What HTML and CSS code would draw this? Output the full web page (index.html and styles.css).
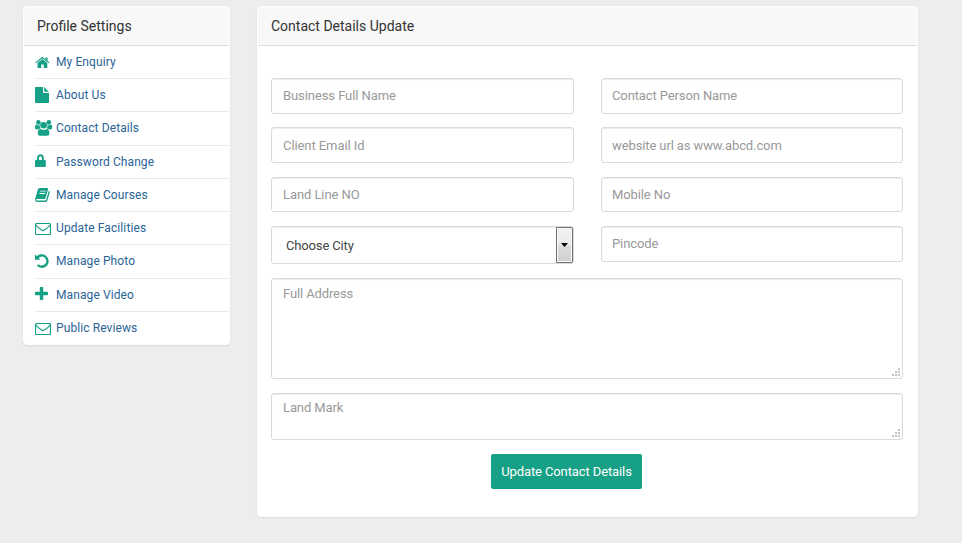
FILE: index.html
```html
<!DOCTYPE html>
<html lang="en">
<head>
<meta charset="utf-8">
<title>Contact Details Update</title>
<link rel="stylesheet" href="styles.css">
</head>
<body>
<main class="layout">
  <aside class="panel sidebar">
    <h2 class="panel-title">Profile Settings</h2>
    <ul class="menu">
      <li><a href="#"><svg viewBox="0 0 18 18"><path d="M2.5 10 7.4 6 12.3 10V14.4q0 .6-.6.6H8.7V11.4H6.2V15H3.1q-.6 0-.6-.6z"/><path d="M.6 9.9 7.4 4.6 14.2 9.9" fill="none" stroke="#16a085" stroke-width="1.2"/><path d="M10.6 4.5h2v3.6l-2-1.6z"/></svg>My Enquiry</a></li>
      <li><a href="#"><svg viewBox="0 0 18 18"><path d="M0 1.8Q0 1 .8 1H8v5.2q0 .8.8.8H14v9.2q0 .8-.8.8H.8q-.8 0-.8-.8z"/><path d="M9.2 1.1 13.8 5.8H9.2z"/></svg>About Us</a></li>
      <li><a href="#"><svg viewBox="0 0 18 18"><circle cx="3.4" cy="3.4" r="2.3"/><circle cx="13.8" cy="3.4" r="2.3"/><circle cx="8.6" cy="6.2" r="3.3"/><path d="M0 8.2Q0 5.4 1.2 5.4q2 1.2 3.4.7-.2 2 1 3.3-1.6 0-2.4 1H1.5Q0 10.3 0 8.2zM17.2 8.2Q17.2 5.4 16 5.4q-2 1.2-3.4.7.2 2-1 3.3 1.6 0 2.4 1h1.7q1.5-.1 1.5-2.2z"/><path d="M2.8 14.500q0-4.500 2.700-4.500 3 2.100 6.200 0 2.700 0 2.700 4.500 0 2.300-2.300 2.300H5.100q-2.300 0-2.300-2.300z"/></svg>Contact Details</a></li>
      <li><a href="#"><svg viewBox="0 0 18 18"><path d="M2.900 8V5.200a2.500 3 0 0 1 5 0V8" fill="none" stroke="#16a085" stroke-width="1.900"/><rect y="7" width="10.800" height="7" rx=".7"/></svg>Password Change</a></li>
      <li><a href="#"><svg viewBox="0 0 18 18"><path fill-rule="evenodd" d="M4.800 2H12q1.400.1 1 1.500l-2.500 8.400q-.3 1-1.300 1H2q-1 0-.9.800.1.900 1.100.9h8.200q.5 0 .7-.5l2.700-9.300q1.300.5.9 1.900l-2.400 8.100q-.4 1.200-1.600 1.200H2.200Q.7 16 .2 14.600q-.4-1.300.1-2.300L2.700 4Q3.200 2 4.800 2zM5.400 4.700 5.100 5.600H10.700L11 4.700zM4.700 7 4.400 7.900H10L10.300 7z"/></svg>Manage Courses</a></li>
      <li><a href="#"><svg viewBox="0 0 18 18"><path class="line" d="M1.400 4.500h13.200q.9 0 .9.900v9.200q0 .9-.9.900H1.400q-.9 0-.9-.9V5.400q0-.9.900-.9zM1 5.800Q1.500 7.500 6.600 11q1.400 1.100 2.800 0 5.100-3.500 5.600-5.200"/></svg>Update Facilities</a></li>
      <li><a href="#"><svg viewBox="0 0 18 18"><path d="M2 5.900A5.700 5.700 0 1 1 2.600 13" fill="none" stroke="#16a085" stroke-width="2.400"/><path d="M0 2.500V7.700H5.300L3.800 6.100 1.500 3.800z"/></svg>Manage Photo</a></li>
      <li><a href="#"><svg viewBox="0 0 18 18"><path d="M5.500 1h2q.7 0 .7.700v4.100h4.100q.7 0 .7.700v2q0 .7-.7.700H8.200v4.100q0 .7-.7.700h-2q-.7 0-.7-.7V9.200H.7Q0 9.200 0 8.500v-2q0-.7.700-.7h4.100V1.700q0-.7.700-.7z"/></svg>Manage Video</a></li>
      <li><a href="#"><svg viewBox="0 0 18 18"><path class="line" d="M1.400 4.500h13.200q.9 0 .9.900v9.200q0 .9-.9.900H1.400q-.9 0-.9-.9V5.400q0-.9.900-.9zM1 5.800Q1.500 7.500 6.600 11q1.400 1.100 2.800 0 5.100-3.500 5.600-5.200"/></svg>Public Reviews</a></li>
    </ul>
  </aside>
  <section class="panel content">
    <h2 class="panel-title">Contact Details Update</h2>
    <form class="form">
      <div class="fields">
        <input class="control raised" placeholder="Business Full Name">
        <input class="control raised right" placeholder="Contact Person Name">
        <input class="control" placeholder="Client Email Id">
        <input class="control right" placeholder="website url as www.abcd.com">
        <input class="control short" placeholder="Land Line NO">
        <input class="control short right" placeholder="Mobile No">
        <div class="control select"><span>Choose City</span><i class="arrow"><svg viewBox="0 0 7 4"><path d="M0 0h7L3.500 4z"/></svg></i></div>
        <input class="control raised right" placeholder="Pincode">
      </div>
      <div class="area address"><textarea class="control" placeholder="Full Address"></textarea><svg class="grip" viewBox="0 0 8 8"><path d="M6 0h2v2H6zM3 3h2v2H3zM6 3h2v2H6zM0 6h2v2H0zM3 6h2v2H3zM6 6h2v2H6z"/></svg></div>
      <div class="area landmark"><textarea class="control" placeholder="Land Mark"></textarea><svg class="grip" viewBox="0 0 8 8"><path d="M6 0h2v2H6zM3 3h2v2H3zM6 3h2v2H6zM0 6h2v2H0zM3 6h2v2H3zM6 6h2v2H6z"/></svg></div>
      <button class="submit" type="button">Update Contact Details</button>
    </form>
  </section>
</main>
</body>
</html>
```
FILE: styles.css
```css
* { box-sizing: border-box; }
body {
  margin: 0;
  height: 543px;
  overflow: hidden;
  background: #ededed;
  font: 13px/18px Roboto, sans-serif;
}
.layout {
  display: flex;
  align-items: flex-start;
  gap: 27px;
  padding: 6px 0 0 23px;
}
.panel {
  background: #fff;
  border: 1px solid #fff;
  border-radius: 4px;
  box-shadow: 0 1px 2px rgba(0, 0, 0, .08);
}
.sidebar { width: 207px; height: 339px; }
.content { width: 661px; height: 511px; }
.panel-title {
  margin: 0;
  height: 39px;
  padding: 10px 13px;
  border-bottom: 1px solid #ddd;
  border-radius: 3px 3px 0 0;
  background: #f8f8f8;
  color: #333;
  font-size: 14px;
  font-weight: 400;
  line-height: 19px;
}
.menu {
  display: grid;
  grid-template-rows: 33px 33px 34px 33px 33px 33px 34px 33px 33px;
  margin: 0;
  padding: 0 0 0 11px;
  list-style: none;
}
.menu li { border-bottom: 1px solid #e8e8e8; }
.menu li:last-child { border-bottom: 0; }
.menu a {
  display: flex;
  gap: 3px;
  padding-top: 7px;
  color: #2a6496;
  font-size: 12px;
  letter-spacing: .1px;
  text-decoration: none;
}
.menu svg { width: 18px; height: 18px; fill: #16a085; }
.menu .line { fill: none; stroke: #16a085; stroke-width: 1.2; }
.form {
  display: flex;
  flex-direction: column;
  padding: 32px 14px 0 13px;
}
.fields {
  display: grid;
  grid-template-columns: 303px 302px;
  grid-template-rows: 35px 36px 35px 38px;
  column-gap: 27px;
  row-gap: 14px;
  align-items: start;
}
.control {
  display: block;
  width: 100%;
  height: 36px;
  margin: 0;
  padding: 0 11px;
  border: 1px solid #dadada;
  border-radius: 3px;
  background: #fff;
  box-shadow: inset 0 1px 1px rgba(0, 0, 0, .075);
  color: #444;
  font: 13px/18px Roboto, sans-serif;
  letter-spacing: -.08px;
  outline: 0;
}
.control::placeholder { color: #999; opacity: 1; }
.right { padding-left: 10px; letter-spacing: -.11px; }
.raised { padding-bottom: 2px; }
.short { height: 35px; padding-bottom: 1px; }
.select {
  display: flex;
  align-items: center;
  justify-content: space-between;
  height: 38px;
  padding: 0 0 0 14px;
  letter-spacing: -.15px;
}
.select span { padding-top: 2px; }
.arrow {
  display: flex;
  align-items: center;
  justify-content: center;
  width: 17px;
  height: 36px;
  border: 1px solid #707070;
  border-radius: 0 2px 2px 0;
  background: linear-gradient(#f2f2f2, #ebebeb 50%, #ddd 51%, #cfcfcf);
  box-shadow: inset 0 0 0 1px #fafafa;
}
.arrow svg { width: 7px; height: 4px; }
.area { position: relative; }
.area .control { height: 100%; padding-top: 6px; resize: none; letter-spacing: -.12px; }
.area.landmark .control { padding-top: 5px; }
.address { height: 101px; margin-top: 14px; }
.landmark { height: 47px; margin-top: 14px; }
.grip {
  position: absolute;
  right: 3px;
  bottom: 3px;
  width: 8px;
  height: 8px;
  fill: #c4c4c4;
}
.submit {
  align-self: center;
  width: 151px;
  height: 35px;
  margin: 14px 0 0 -41px;
  padding: 0;
  border: 0;
  border-radius: 2px;
  background: #16a085;
  color: #fff;
  font: 13px/18px Roboto, sans-serif;
  letter-spacing: -.11px;
}
```
